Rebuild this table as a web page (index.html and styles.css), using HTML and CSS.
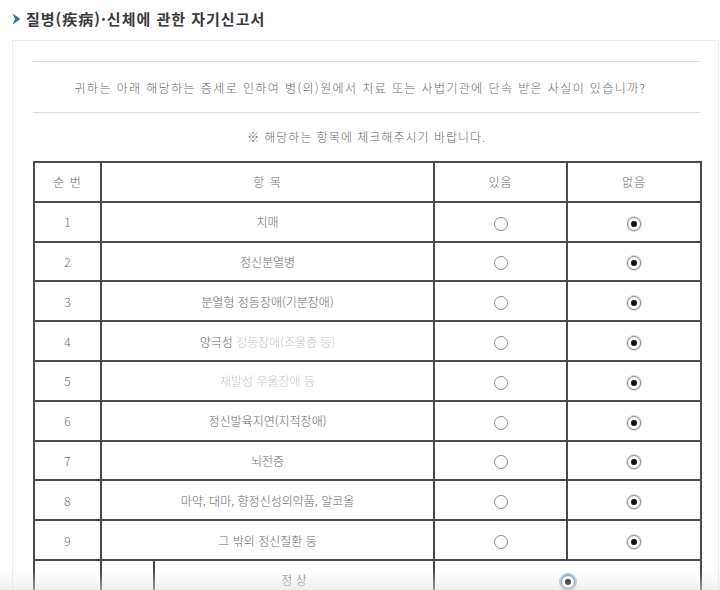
FILE: index.html
```html
<!DOCTYPE html>
<html lang="ko">
<head>
<meta charset="utf-8">
<link rel="stylesheet" href="styles.css">
</head>
<body>
<div class="page">
  <h2 class="title">
    <svg class="chev" width="9" height="12" viewBox="0 0 9 12"><path d="M0.5 0.5 L8.5 6 L0.5 11.5 L3 6 Z" fill="#2f6db5"/></svg>
    <span>질병(疾病)·신체에 관한 자기신고서</span>
  </h2>
  <div class="box">
    <p class="question">귀하는 아래 해당하는 증세로 인하여 병(의)원에서 치료 또는 사법기관에 단속 받은 사실이 있습니까?</p>
    <p class="note">※ 해당하는 항목에 체크해주시기 바랍니다.</p>
    <table class="grid">
      <colgroup>
        <col class="c-no"><col class="c-sub"><col class="c-item"><col class="c-yes"><col class="c-none">
      </colgroup>
      <thead>
        <tr><th>순 번</th><th colspan="2">항 목</th><th>있음</th><th>없음</th></tr>
      </thead>
      <tbody>
        <tr><td>1</td><td colspan="2">치매</td><td><span class="radio"></span></td><td><span class="radio on"></span></td></tr>
        <tr><td>2</td><td colspan="2">정신분열병</td><td><span class="radio"></span></td><td><span class="radio on"></span></td></tr>
        <tr><td>3</td><td colspan="2">분열형 정동장애(기분장애)</td><td><span class="radio"></span></td><td><span class="radio on"></span></td></tr>
        <tr><td>4</td><td colspan="2">양극성 <span class="blur">정동장애(조울증 등)</span></td><td><span class="radio"></span></td><td><span class="radio on"></span></td></tr>
        <tr><td>5</td><td colspan="2"><span class="blur">재발성 우울장애 등</span></td><td><span class="radio"></span></td><td><span class="radio on"></span></td></tr>
        <tr><td>6</td><td colspan="2">정신발육지연(지적장애)</td><td><span class="radio"></span></td><td><span class="radio on"></span></td></tr>
        <tr><td>7</td><td colspan="2">뇌전증</td><td><span class="radio"></span></td><td><span class="radio on"></span></td></tr>
        <tr><td>8</td><td colspan="2">마약, 대마, 향정신성의약품, 알코올</td><td><span class="radio"></span></td><td><span class="radio on"></span></td></tr>
        <tr><td>9</td><td colspan="2">그 밖의 정신질환 등</td><td><span class="radio"></span></td><td><span class="radio on"></span></td></tr>
        <tr><td></td><td></td><td>정 상</td><td colspan="2"><span class="radio on focus"></span></td></tr>
      </tbody>
    </table>
  </div>
  <div class="fade"></div>
</div>
</body>
</html>
```

FILE: styles.css
```css
* { box-sizing: border-box; }
html, body { margin: 0; padding: 0; background: #fff; }
body {
  font-family: "Noto Sans CJK KR", "Noto Sans", sans-serif;
  color: #666;
  font-size: 12px;
  width: 720px;
  height: 590px;
  overflow: hidden;
}
.page { position: relative; height: 590px; }
.title {
  margin: 0;
  height: 40px;
  padding: 0 0 4px 12px;
  display: flex;
  align-items: center;
  gap: 5px;
  font-size: 15px;
  font-weight: bold;
  color: #3a3a3a;
  letter-spacing: 1px;
}
.chev { flex: none; margin-top: 1px; }
.box {
  margin-left: 12px;
  border-top: 1px solid #eee;
  border-left: 1px solid #eee;
  border-right: 1px solid #eee;
  width: 707px;
  padding: 20px 6px 0 20px;
  height: 560px;
}
.question {
  margin: 0;
  width: 667px;
  height: 52px;
  border-top: 1px solid #dcdcdc;
  border-bottom: 1px solid #dcdcdc;
  display: flex;
  align-items: center;
  justify-content: center;
  color: #6a6a6a;
  font-size: 12px;
  font-weight: 300;
  letter-spacing: 1.4px;
  padding-right: 12px;
}
.note {
  margin: 0;
  width: 667px;
  height: 48px;
  display: flex;
  align-items: center;
  justify-content: center;
  color: #6a6a6a;
  font-size: 12px;
  font-weight: 300;
  letter-spacing: 1px;
  padding-bottom: 2px;
}
.grid {
  border-collapse: collapse;
  width: 667px;
  table-layout: fixed;
}
.c-no { width: 67px; }
.c-sub { width: 53px; }
.c-item { width: 280px; }
.c-yes { width: 133px; }
.c-none { width: 134px; }
.grid th, .grid td {
  border: 2px solid #4a4a4a;
  height: 39.8px;
  padding: 0;
  text-align: center;
  vertical-align: middle;
  font-weight: 300;
  color: #6a6a6a;
  font-size: 12px;
}
.grid th { letter-spacing: 1px; }
.blur { color: #c4c4c4; filter: blur(0.6px); }
.radio {
  display: inline-block;
  width: 14px;
  height: 14px;
  border-radius: 50%;
  border: 1px solid #8a8a8a;
  background: #fff;
  vertical-align: middle;
  position: relative;
}
.radio.on {
  border: 1px solid #888;
  box-shadow: 0 0 0 1px #ddd;
}
.radio.on::after {
  content: "";
  position: absolute;
  left: 3px; top: 3px;
  width: 6px; height: 6px;
  border-radius: 50%;
  background: #111;
}
.radio.focus {
  box-shadow: 0 0 0 2px #9cc7e6;
}
.fade {
  position: absolute;
  left: 0; right: 0; bottom: 0;
  height: 18px;
  background: linear-gradient(to bottom, rgba(230,230,230,0), rgba(225,225,225,0.55));
  pointer-events: none;
}
```
